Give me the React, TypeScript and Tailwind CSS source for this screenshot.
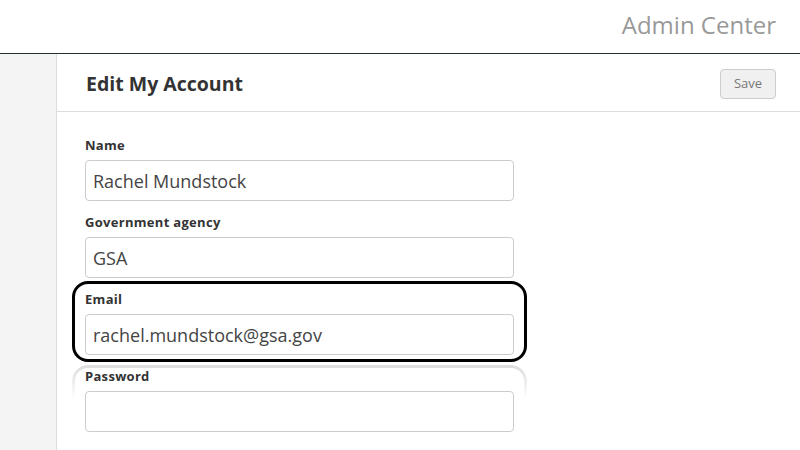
import React from "react";

function Field({ label, value }: { label: string; value?: string }) {
  return (
    <div className="flex flex-col">
      <div className="h-[16px] leading-[16px] text-[13px] font-bold text-[#333] tracking-[0.3px]">{label}</div>
      <div className="mt-[7px] h-[41px] w-[429px] rounded-[4px] border border-[#cccccc] bg-white flex items-center px-[7px] pt-[2px] text-[18px] text-[#444]">
        {value}
      </div>
    </div>
  );
}

export default function App() {
  return (
    <div className="w-[800px] h-[450px] overflow-hidden bg-white flex flex-col" style={{ fontFamily: '"Open Sans", sans-serif' }}>
      <header className="h-[54px] shrink-0 border-b border-[#243030] flex items-center justify-end pr-[24px]">
        <span className="text-[24px] text-[#999] leading-none -mt-[4px]">Admin Center</span>
      </header>
      <div className="flex flex-1 min-h-0">
        <aside className="w-[57px] shrink-0 bg-[#f4f4f4] border-r border-[#dddddd]" />
        <main className="flex-1 flex flex-col">
          <div className="h-[58px] shrink-0 border-b border-[#dddddd] flex items-center justify-between pl-[29px] pr-[24px]">
            <h1 className="text-[19.5px] font-bold text-[#333] mt-[2px]">Edit My Account</h1>
            <button className="h-[30px] w-[56px] rounded-[4px] border border-[#cccccc] bg-[#f0f0f0] text-[13px] text-[#777] mt-[2px]">
              Save
            </button>
          </div>
          <div className="flex flex-col items-start gap-[13px] pl-[28px] pt-[25px]">
            <Field label="Name" value="Rachel Mundstock" />
            <Field label="Government agency" value="GSA" />
            <div className="relative">
              <div className="absolute -left-[13px] -right-[13px] -top-[10px] -bottom-[7px] rounded-[16px] border-[3px] border-black pointer-events-none" />
              <Field label="Email" value="rachel.mundstock@gsa.gov" />
            </div>
            <div className="relative">
              <div className="absolute -left-[13px] -right-[13px] -top-[3px] h-[34px] rounded-t-[16px] border-t-[3px] border-x-[3px] border-[#dcdcdc] pointer-events-none [mask-image:linear-gradient(to_bottom,black,transparent)]" />
              <Field label="Password" />
            </div>
          </div>
        </main>
      </div>
    </div>
  );
}
